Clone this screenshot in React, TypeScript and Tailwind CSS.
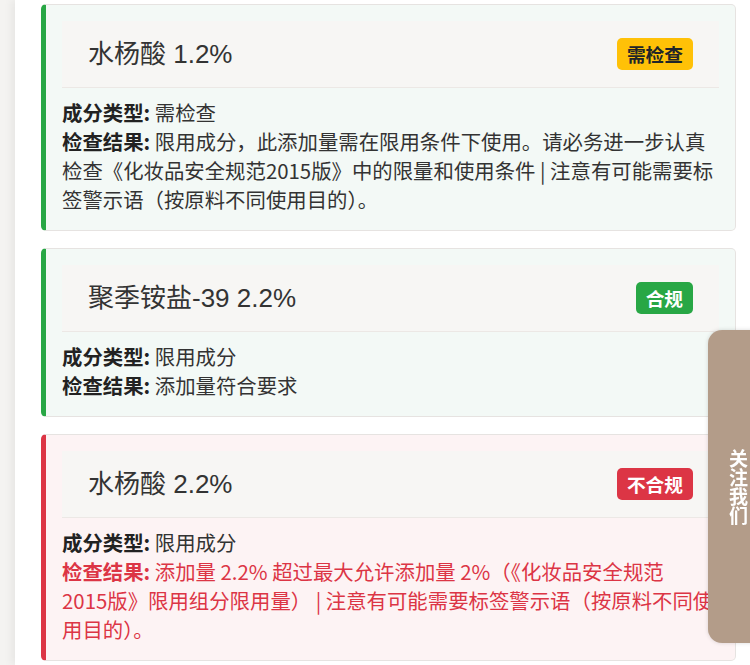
import React from 'react';

type Status = 'check' | 'ok' | 'bad';

const items: { name: string; status: Status; type: string; result: string }[] = [
  {
    name: '水杨酸 1.2%',
    status: 'check',
    type: '需检查',
    result:
      '限用成分，此添加量需在限用条件下使用。请必务进一步认真检查《化妆品安全规范2015版》中的限量和使用条件 | 注意有可能需要标签警示语（按原料不同使用目的）。',
  },
  {
    name: '聚季铵盐-39 2.2%',
    status: 'ok',
    type: '限用成分',
    result: '添加量符合要求',
  },
  {
    name: '水杨酸 2.2%',
    status: 'bad',
    type: '限用成分',
    // word joiner keeps "2015版" together so it wraps as a unit
    result:
      '添加量 2.2% 超过最大允许添加量 2%（《化妆品安全规范2015\u2060版》限用组分限用量） | 注意有可能需要标签警示语（按原料不同使用目的）。',
  },
];

const Badge = ({ status }: { status: Status }) => {
  if (status === 'check')
    return <span className="flex h-[32px] items-center rounded-[5px] bg-[#ffc107] px-[10px] text-[18.7px] font-bold text-[#212529]">需检查</span>;
  if (status === 'ok')
    return <span className="flex h-[32px] items-center rounded-[5px] bg-[#28a745] px-[10px] text-[18.7px] font-bold text-white">合规</span>;
  return <span className="flex h-[32px] items-center rounded-[5px] bg-[#dc3545] px-[10px] text-[18.7px] font-bold text-white">不合规</span>;
};

const ResultCard = ({ item }: { item: (typeof items)[number] }) => {
  const bad = item.status === 'bad';
  return (
    <div
      className={
        bad
          ? 'rounded-[5px] border border-[#e6e3e1] border-l-[5px] border-l-[#dc3545] bg-[#fdf3f4] p-[16px]'
          : 'rounded-[5px] border border-[#e6e3e1] border-l-[5px] border-l-[#28a745] bg-[#f3f9f6] p-[16px]'
      }
    >
      <div className="flex h-[67px] items-center justify-between border-b border-[#ece8e5] bg-[#f7f6f4] px-[26px]">
        <h3
          className="text-[26px] font-normal text-[#333]"
          style={{ fontFamily: '"Liberation Sans", "Noto Sans CJK SC", sans-serif' }}
        >
          {item.name}
        </h3>
        <Badge status={item.status} />
      </div>
      <div className="mt-[10px] text-[20.4px] leading-[29px] text-[#333]">
        <div>
          <span className="font-bold text-[#222]">成分类型:</span> {item.type}
        </div>
        <div className={bad ? 'text-[#dc3545]' : ''}>
          <span className={bad ? 'font-bold' : 'font-bold text-[#222]'}>检查结果:</span> {item.result}
        </div>
      </div>
    </div>
  );
};

export default function App() {
  return (
    <div
      className="h-[665px] overflow-hidden bg-[#f4f3f1]"
      style={{ fontFamily: '"Noto Sans CJK SC", "Noto Sans", sans-serif' }}
    >
      <div className="ml-[15px] h-full bg-white pl-[26px] pr-[14px] pt-[4px] shadow-[-4px_0_8px_rgba(0,0,0,0.05)]">
        <div className="flex flex-col gap-[17px]">
          {items.map((item, i) => (
            <ResultCard key={i} item={item} />
          ))}
        </div>
      </div>

      {/* floating follow button */}
      <div className="fixed right-[-18px] top-[330px] flex h-[313px] w-[60px] items-center justify-center rounded-[14px] bg-[#b39c89] shadow-[0_0_4px_rgba(0,0,0,0.15)]">
        <span className="text-[19px] font-bold leading-[20px] text-white [writing-mode:vertical-rl]">关注我们</span>
      </div>
    </div>
  );
}
